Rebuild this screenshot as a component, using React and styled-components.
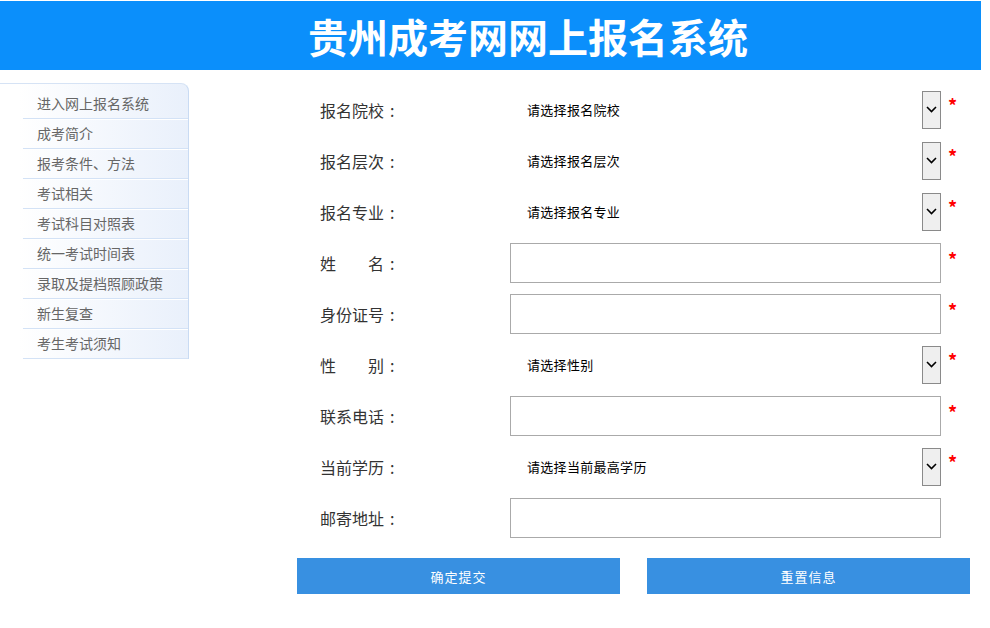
import React from 'react';
import styled, { createGlobalStyle } from 'styled-components';

const GlobalStyle = createGlobalStyle`
  html, body {
    margin: 0;
    padding: 0;
    background: #fff;
    font-family: 'Noto Sans CJK SC', 'Noto Sans', sans-serif;
  }
`;

const Page = styled.div`
  width: 990px;
  padding-top: 1px;
`;

const Header = styled.header`
  width: 981px;
  height: 69px;
  background-color: #0b8ffb;
  display: flex;
  align-items: center;
  padding-left: 308px;
  box-sizing: border-box;
`;

const Title = styled.h1`
  margin: 0;
  color: #fff;
  font-size: 40px;
  font-weight: bold;
  letter-spacing: 0;
  line-height: 1;
`;

const Body = styled.div`
  display: flex;
  align-items: flex-start;
`;

const Sidebar = styled.ul`
  list-style: none;
  margin: 13px 0 0;
  padding: 1px 0 0;
  width: 189px;
  box-sizing: border-box;
  background: linear-gradient(to right, #fff 10%, #e9f0fb);
  border-top: 1px solid #d6e3f5;
  border-right: 1px solid #c9dbf3;
  border-top-right-radius: 8px;
  flex-shrink: 0;
`;

const NavItem = styled.li`
  margin-left: 23px;
  height: ${p => (p.first ? '34px' : '30px')};
  padding-left: 14px;
  display: flex;
  align-items: center;
  padding-top: ${p => (p.first ? '3px' : '0')};
  padding-bottom: 1px;
  box-sizing: border-box;
  font-size: 14px;
  color: #666;
  border-bottom: 1px solid #d3e2f6;
  box-shadow: 0 1px 0 #fff;
`;

const Form = styled.form`
  margin: 14px 0 0 108px;
  width: 673px;
`;

const Row = styled.div`
  display: grid;
  grid-template-columns: 213px 431px 29px;
  height: 51px;
  align-items: center;
`;

const Label = styled.label`
  padding-left: 23px;
  font-size: 16px;
  color: #333;
  white-space: pre;
`;

const Colon = styled.span`
  margin-left: 6px;
`;

const Input = styled.input`
  height: 40px;
  box-sizing: border-box;
  border: 1px solid #aaa;
  margin: 0;
  padding: 0 6px;
  font-size: 14px;
  outline: none;
`;

const Select = styled.div`
  height: 39px;
  display: flex;
  align-items: center;
  justify-content: space-between;
  padding-left: 17px;
  font-size: 13px;
  color: #000;
  letter-spacing: 0.3px;
`;

const Arrow = styled.span`
  width: 19px;
  height: 38px;
  box-sizing: border-box;
  border: 1px solid #8a8a8a;
  background: #efefef;
  display: flex;
  align-items: center;
  justify-content: center;
`;

const Star = styled.span`
  align-self: start;
  margin-top: ${p => (p.select ? '12px' : '13px')};
  padding-left: 7px;
  color: #f00;
  font-size: 18px;
  line-height: 1;
  font-weight: bold;
`;

const Buttons = styled.div`
  display: flex;
  gap: 27px;
  margin-top: 15px;
`;

const Button = styled.button`
  width: 323px;
  height: 36px;
  border: none;
  background: #3890e1;
  color: #fff;
  font-size: 13px;
  letter-spacing: 1px;
  font-family: inherit;
  cursor: pointer;
`;

const navItems = [
  '进入网上报名系统',
  '成考简介',
  '报考条件、方法',
  '考试相关',
  '考试科目对照表',
  '统一考试时间表',
  '录取及提档照顾政策',
  '新生复查',
  '考生考试须知',
];

const fields = [
  { label: '报名院校', select: '请选择报名院校', required: true },
  { label: '报名层次', select: '请选择报名层次', required: true },
  { label: '报名专业', select: '请选择报名专业', required: true },
  { label: '姓\u3000\u3000名', required: true },
  { label: '身份证号', required: true },
  { label: '性\u3000\u3000别', select: '请选择性别', required: true },
  { label: '联系电话', required: true },
  { label: '当前学历', select: '请选择当前最高学历', required: true },
  { label: '邮寄地址' },
];

const Chevron = () => (
  <svg width="11" height="7" viewBox="0 0 11 7">
    <path d="M1 1 L5.5 5.5 L10 1" fill="none" stroke="#000" strokeWidth="1.6" />
  </svg>
);

const App = () => (
  <Page>
    <GlobalStyle />
    <Header>
      <Title>贵州成考网网上报名系统</Title>
    </Header>
    <Body>
      <Sidebar>
        {navItems.map((item, i) => (
          <NavItem key={item} first={i === 0}>{item}</NavItem>
        ))}
      </Sidebar>
      <Form onSubmit={e => e.preventDefault()}>
        {fields.map(f => (
          <Row key={f.label}>
            <Label>{f.label}<Colon>:</Colon></Label>
            {f.select ? (
              <Select>
                {f.select}
                <Arrow><Chevron /></Arrow>
              </Select>
            ) : (
              <Input type="text" />
            )}
            {f.required ? <Star select={!!f.select}>*</Star> : <span />}
          </Row>
        ))}
        <Buttons>
          <Button type="submit">确定提交</Button>
          <Button type="reset">重置信息</Button>
        </Buttons>
      </Form>
    </Body>
  </Page>
);

export default App;
